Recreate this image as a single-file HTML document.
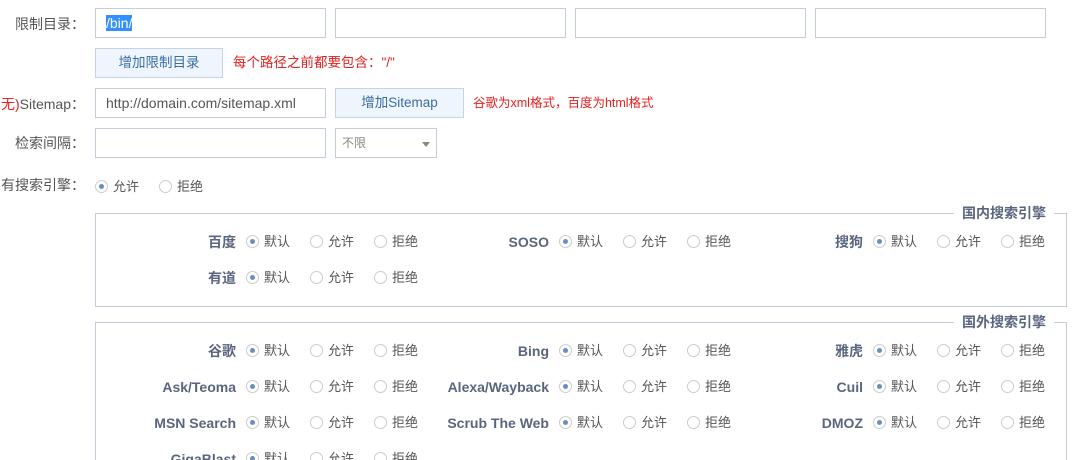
<!DOCTYPE html>
<html style="overflow:hidden;width:1088px;height:460px"><head><meta charset="utf-8"><style>
*{box-sizing:border-box;margin:0;padding:0}
body{width:1088px;height:460px;overflow:hidden;background:#fff;font-family:"Liberation Sans","Noto Sans CJK SC",sans-serif;font-size:13px;color:#555;position:relative}
.lbl{position:absolute;right:1003px;text-align:right;color:#555;line-height:16px;font-size:14px;white-space:nowrap}
.inp{position:absolute;border:1px solid #c5cddb;height:30px;background:#fff;line-height:28px;padding-left:10px;color:#555;font-size:14px;white-space:nowrap}
.btn{position:absolute;border:1px solid #c5d3e4;background:#eef5fc;color:#3a6ea5;height:30px;line-height:28px;text-align:center;font-size:13.5px}
.red{position:absolute;color:#e52020;line-height:16px;white-space:nowrap}
.r{position:absolute;width:13px;height:13px;border:1px solid #ccc;border-radius:50%;background:#fff}
.r.c::after{content:"";position:absolute;left:3px;top:3px;width:5px;height:5px;border-radius:50%;background:#6b8dc6}
.t{position:absolute;line-height:16px;color:#555;white-space:nowrap}
.n{position:absolute;text-align:right;font-weight:bold;color:#5a6580;line-height:16px;font-size:14px;white-space:nowrap}
.fs{position:absolute;left:95px;width:972px;border:1px solid #c5cddb}
.lg{position:absolute;background:#fff;padding:0 8px;font-weight:bold;color:#5a6580;line-height:16px;font-size:14px;white-space:nowrap}
</style></head><body>
<div class="lbl" style="top:16px">限制目录：</div>
<div class="inp" style="left:95px;top:8px;width:231px"><span style="background:#3390ff;color:#fff">/bin/</span></div>
<div class="inp" style="left:335px;top:8px;width:231px"></div>
<div class="inp" style="left:575px;top:8px;width:231px"></div>
<div class="inp" style="left:815px;top:8px;width:231px"></div>
<div class="btn" style="left:95px;top:48px;width:128px">增加限制目录</div>
<div class="red" style="left:233px;top:55px;font-size:13.5px">每个路径之前都要包含："/"</div>
<div class="lbl" style="top:96px"><span style="color:#e52020">无)</span>Sitemap：</div>
<div class="inp" style="left:95px;top:88px;width:231px">http://domain.com/sitemap.xml</div>
<div class="btn" style="left:335px;top:88px;width:129px">增加Sitemap</div>
<div class="red" style="left:473px;top:95px;font-size:12.5px">谷歌为xml格式，百度为html格式</div>
<div class="lbl" style="top:135px">检索间隔：</div>
<div class="inp" style="left:95px;top:128px;width:231px"></div>
<div class="inp" style="left:335px;top:128px;width:102px;padding-left:6px;color:#888;font-size:12px">不限<span style="position:absolute;right:6px;top:13px;border:4px solid transparent;border-top:5px solid #888;border-bottom:0"></span></div>
<div class="lbl" style="top:177px">有搜索引擎：</div>
<div class="r c" style="left:95px;top:180px"></div><div class="t" style="left:113px;top:179px">允许</div>
<div class="r" style="left:159px;top:180px"></div><div class="t" style="left:177px;top:179px">拒绝</div>

<div class="fs" style="top:213px;height:94px"></div>
<div class="lg" style="left:954px;top:205px">国内搜索引擎</div>
<div class="fs" style="top:322px;height:160px"></div>
<div class="lg" style="left:954px;top:314px">国外搜索引擎</div>

<div id="g"></div>
<script>
var rows=[
[234,[["百度",0],["SOSO",1],["搜狗",2]]],
[270,[["有道",0]]],
[343,[["谷歌",0],["Bing",1],["雅虎",2]]],
[379,[["Ask/Teoma",0],["Alexa/Wayback",1],["Cuil",2]]],
[415,[["MSN Search",0],["Scrub The Web",1],["DMOZ",2]]],
[451,[["GigaBlast",0]]]];
var xs=[246,559,873],h="";
rows.forEach(function(r){var y=r[0];r[1].forEach(function(g){var x=xs[g[1]];
h+='<div class="n" style="right:'+(1088-x+10)+'px;top:'+y+'px">'+g[0]+'</div>';
var L=["默认","允许","拒绝"];for(var i=0;i<3;i++){var rx=x+i*64;
h+='<div class="r'+(i==0?' c':'')+'" style="left:'+rx+'px;top:'+(y+1)+'px"></div><div class="t" style="left:'+(rx+18)+'px;top:'+y+'px">'+L[i]+'</div>';}});});
document.getElementById("g").innerHTML=h;
</script>
</body></html>
